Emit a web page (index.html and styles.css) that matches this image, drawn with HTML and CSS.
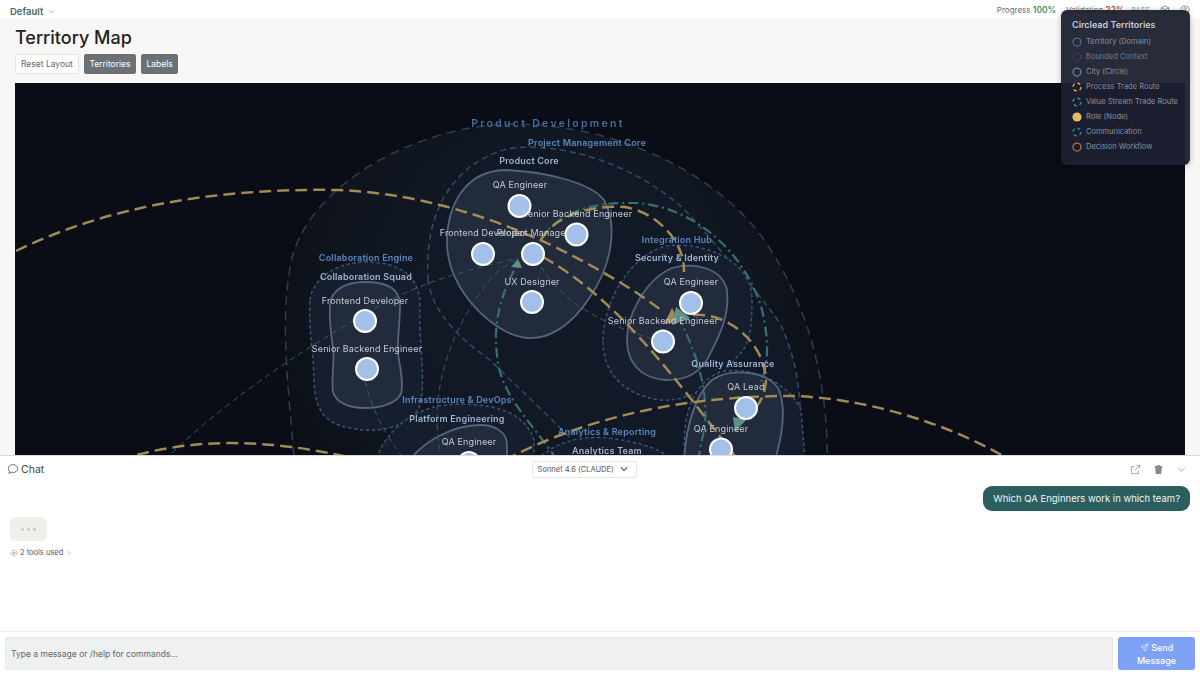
FILE: index.html
```html
<!DOCTYPE html>
<html lang="en">
<head>
  <meta charset="UTF-8" />
  <title>Territory Map</title>
  <link rel="stylesheet" href="styles.css">
</head>
<body>

  <header class="topbar">
    <div class="workspace">Default
      <svg class="chev" viewBox="0 0 10 6"><path d="M1 1l4 4 4-4"/></svg>
    </div>
    <div class="status">
      <span>Progress <b class="good">100%</b></span>
      <span>Validation <b class="bad">22%</b></span>
      <span class="pass">PASS</span>
      <svg class="top-icon" viewBox="0 0 16 16"><path d="M8 1.500l6 3v7l-6 3-6-3v-7zM2 4.500l6 3 6-3M8 7.500v7"/></svg>
      <svg class="top-icon" viewBox="0 0 16 16"><circle cx="8" cy="8" r="6.500"/><path d="M6.200 6.200a1.900 1.900 0 1 1 2.600 1.800c-.5.3-.8.6-.8 1.300M8 11.200v.3"/></svg>
    </div>
  </header>

  <aside class="legend">
    <h4>Circlead Territories</h4>
    <ul>
      <li><svg class="dot" viewBox="0 0 12 12"><circle class="d-domain" cx="6" cy="6" r="4.800"/></svg>Territory (Domain)</li>
      <li class="dim"><svg class="dot" viewBox="0 0 12 12"><circle class="d-context" cx="6" cy="6" r="4.800"/></svg>Bounded Context</li>
      <li><svg class="dot" viewBox="0 0 12 12"><circle class="d-city" cx="6" cy="6" r="4.800"/></svg>City (Circle)</li>
      <li><svg class="dot" viewBox="0 0 12 12"><circle class="d-process" cx="6" cy="6" r="4.800"/></svg>Process Trade Route</li>
      <li><svg class="dot" viewBox="0 0 12 12"><circle class="d-value" cx="6" cy="6" r="4.800"/></svg>Value Stream Trade Route</li>
      <li><svg class="dot" viewBox="0 0 12 12"><circle class="d-role" cx="6" cy="6" r="5.500"/></svg>Role (Node)</li>
      <li><svg class="dot" viewBox="0 0 12 12"><circle class="d-comm" cx="6" cy="6" r="4.800"/></svg>Communication</li>
      <li><svg class="dot" viewBox="0 0 12 12"><circle class="d-decision" cx="6" cy="6" r="4.800"/></svg>Decision Workflow</li>
    </ul>
  </aside>

  <main class="content">
    <h1>Territory Map</h1>
    <div class="toolbar">
      <button class="btn">Reset Layout</button>
      <button class="btn btn-on">Territories</button>
      <button class="btn btn-on">Labels</button>
    </div>

    <div class="map">
      <svg viewBox="15 83 1170 372" width="1170" height="372">
        <defs>
          <radialGradient id="domain-fill" gradientUnits="userSpaceOnUse" cx="550" cy="300" r="290">
            <stop offset="0" stop-color="#151d2c"/>
            <stop offset="0.7" stop-color="#10161f"/>
            <stop offset="1" stop-color="#0b0f17"/>
          </radialGradient>
        </defs>

        <!-- territories -->
        <path class="domain" d="M295 470C290 400 278 320 292 258C305 205 370 150 460 130C560 108 690 150 755 228C800 285 830 370 827 470Z"/>
        <path class="domain-in" d="M428 280C424 215 450 165 507 149C560 140 640 165 690 215C730 262 765 300 781 325C798 365 805 400 797 470H600C560 425 520 390 490 360C455 335 432 310 428 280Z"/>

        <path class="context" d="M310 300C312 280 335 262 366 262C398 262 420 275 420 305C418 345 428 385 418 410C405 428 375 434 350 428C325 424 316 410 314 385C314 350 308 330 310 300Z"/>
        <path class="context" d="M603 340C603 300 635 245 677 245C710 245 750 262 752 297C752 330 750 345 737 357C715 385 690 402 660 400C625 395 603 375 603 340Z"/>
        <path class="context" d="M373 470C382 430 415 405 457 404C495 404 525 412 534 440V470Z"/>
        <path class="context" d="M686 470C680 420 690 385 720 372C755 365 790 385 801 410L806 470Z"/>
        <path class="context" d="M530 470C545 445 575 435 608 438C640 442 670 450 680 470Z"/>

        <!-- cities -->
        <path class="city" d="M447 243C447 205 465 170 507 170C545 172 590 182 604 200C618 225 612 265 590 297C572 325 550 339 528 338C495 336 447 290 447 243Z"/>
        <path class="city" d="M330 305C331 290 345 282 365 282C385 282 400 288 400 305C400 325 397 340 398 352C400 370 404 382 401 394C395 405 378 408 365 408C350 408 336 403 333 392C331 378 335 360 333 348C331 335 329 320 330 305Z"/>
        <path class="city" d="M627 340C627 315 645 280 672 268C695 262 722 268 727 290C730 315 720 335 707 360C695 378 680 380 665 380C640 378 627 362 627 340Z"/>
        <path class="city" d="M684 470C684 430 695 395 712 380C730 368 765 370 778 388C786 405 785 430 772 470Z"/>
        <path class="city" d="M403 470C420 440 455 425 480 425C495 425 507 432 507 445V470Z"/>

        <!-- communication -->
        <path class="comm" d="M165 460C215 410 290 355 390 300C440 275 490 265 518 258"/>
        <path class="comm" d="M365 381C372 410 385 435 405 460"/>
        <path class="comm" d="M440 450C430 400 445 335 490 280C500 268 510 262 520 258"/>
        <path class="comm" d="M536 258C555 295 590 320 650 338"/>

        <!-- value stream routes -->
        <path class="value" d="M557 460C530 420 500 395 497 355C493 325 500 295 517 265"/>
        <path class="value" d="M540 240C560 210 595 202 635 203C690 205 745 250 762 310C770 345 768 365 760 385"/>
        <path class="value" d="M678 316C695 350 708 385 705 425L698 460"/>

        <!-- process routes -->
        <path class="route" d="M16 251C110 205 220 188 340 190C440 195 540 230 640 295L664 312"/>
        <path class="route" d="M543 257C620 300 680 385 738 460"/>
        <path class="route" d="M541 240C555 215 590 205 625 207C655 212 685 240 684 272"/>
        <path class="route" d="M693 315C730 312 765 345 766 380C765 400 755 410 745 418"/>
        <path class="route" d="M120 460C195 435 280 440 360 460"/>
        <path class="route" d="M505 460C590 415 690 396 790 396C860 397 945 422 1005 457"/>

        <polygon class="arrow-gold" points="672,308 664,324 680,322"/>
        <polygon class="arrow-teal" points="676,307 672,325 690,318"/>
        <polygon class="arrow-teal" points="518,259 511,267 522,268"/>
        <polygon class="arrow-teal" points="747,419 733,417 735,432"/>

        <!-- labels -->
        <text class="t-domain" x="548" y="127">Product Development</text>
        <text class="t-ctx" x="587" y="146">Project Management Core</text>
        <text class="t-ctx" x="366" y="261">Collaboration Engine</text>
        <text class="t-ctx" x="677" y="243">Integration Hub</text>
        <text class="t-ctx" x="457" y="403">Infrastructure &amp; DevOps</text>
        <text class="t-ctx" x="607" y="435">Analytics &amp; Reporting</text>

        <text class="t-team" x="529" y="164">Product Core</text>
        <text class="t-team" x="366" y="280">Collaboration Squad</text>
        <text class="t-team" x="677" y="261">Security &amp; Identity</text>
        <text class="t-team" x="733" y="367">Quality Assurance</text>
        <text class="t-team" x="457" y="422">Platform Engineering</text>
        <text class="t-team" x="607" y="454">Analytics Team</text>

        <!-- roles -->
        <circle class="node" cx="519.500" cy="206" r="11"/>
        <circle class="node" cx="576.500" cy="234.500" r="11"/>
        <circle class="node" cx="483" cy="254" r="11"/>
        <circle class="node" cx="533" cy="254" r="11"/>
        <circle class="node" cx="532" cy="302" r="11"/>
        <circle class="node" cx="365" cy="321" r="11"/>
        <circle class="node" cx="367" cy="369" r="11"/>
        <circle class="node" cx="691" cy="303" r="11"/>
        <circle class="node" cx="663" cy="341.500" r="11"/>
        <circle class="node" cx="746" cy="408" r="11"/>
        <circle class="node" cx="721" cy="449.500" r="11"/>
        <circle class="node" cx="469" cy="463" r="11"/>

        <text class="t-role" x="520" y="188">QA Engineer</text>
        <text class="t-role" x="577" y="217">Senior Backend Engineer</text>
        <text class="t-role" x="483" y="236">Frontend Developer</text>
        <text class="t-role" x="533" y="236">Project Manager</text>
        <text class="t-role" x="532" y="285">UX Designer</text>
        <text class="t-role" x="365" y="304">Frontend Developer</text>
        <text class="t-role" x="367" y="352">Senior Backend Engineer</text>
        <text class="t-role" x="691" y="285">QA Engineer</text>
        <text class="t-role" x="663" y="324">Senior Backend Engineer</text>
        <text class="t-role" x="746" y="390">QA Lead</text>
        <text class="t-role" x="721" y="432">QA Engineer</text>
        <text class="t-role" x="469" y="445">QA Engineer</text>
      </svg>
    </div>
  </main>

  <section class="chat">
    <div class="chat-head">
      <div class="chat-title">
        <svg viewBox="0 0 16 16"><path d="M8 2.200c3.500 0 6.300 2.300 6.300 5.200S11.500 12.600 8 12.600c-.8 0-1.500-.1-2.200-.3L2.600 13.800l.8-2.900C2.300 9.900 1.700 8.700 1.700 7.400 1.700 4.500 4.500 2.200 8 2.200z"/><path d="M5.300 7.400h.1M8 7.400h.1M10.700 7.400h.1"/></svg>
        Chat
      </div>
      <div class="model">Sonnet 4.6 (CLAUDE)
        <svg class="chev dark" viewBox="0 0 10 6"><path d="M1 1l4 4 4-4"/></svg>
      </div>
      <div class="chat-actions">
        <svg viewBox="0 0 16 16"><path d="M12 9.500V14H2V4h4.500M9.500 2H14v4.500M14 2L7.500 8.500"/></svg>
        <svg viewBox="0 0 16 16"><path class="filled" d="M3 4h10l-1 10.500H4zM6 1.500h4V3H6zM2 3h12v1H2z"/></svg>
        <svg viewBox="0 0 16 16"><path d="M3 5.500l5 5 5-5"/></svg>
      </div>
    </div>

    <div class="messages">
      <div class="msg-user">Which QA Enginners work in which team?</div>
      <div class="typing"><span></span><span></span><span></span></div>
      <div class="tools">
        <svg viewBox="0 0 16 16"><circle cx="8" cy="8" r="2.300"/><circle cx="8" cy="8" r="6" stroke-dasharray="2.200 1"/></svg>
        2 tools used
        <svg class="tools-chev" viewBox="0 0 6 10"><path d="M1 1l4 4-4 4"/></svg>
      </div>
    </div>

    <form class="composer">
      <input type="text" placeholder="Type a message or /help for commands...">
      <button type="button" class="send">
        <svg viewBox="0 0 16 16"><path d="M14.500 1.500L1.500 6.500l5 2.500 2.500 5.500zM14.500 1.500L6.500 9"/></svg>
        Send Message
      </button>
    </form>
  </section>

</body>
</html>
```

FILE: styles.css
```css
* {
  box-sizing: border-box;
}

body {
  margin: 0;
  height: 675px;
  overflow: hidden;
  display: flex;
  flex-direction: column;
  font-family: Inter, "Liberation Sans", sans-serif;
  background: #fff;
  color: #2b2b2b;
  position: relative;
}

svg {
  display: block;
}

.topbar {
  height: 19px;
  flex: none;
  background: #fff;
  display: flex;
  justify-content: space-between;
  align-items: center;
  padding: 4px 10px 0;
}

.workspace {
  display: flex;
  align-items: center;
  gap: 5px;
  font-size: 9.500px;
  font-weight: 600;
  color: #3f6b63;
}

.chev {
  width: 7px;
  height: 5px;
  fill: none;
  stroke: #9a9a9a;
  stroke-width: 1;
}

.chev.dark {
  width: 8px;
  height: 6px;
  stroke: #444;
  stroke-width: 1.300;
}

.status {
  display: flex;
  align-items: center;
  gap: 10px;
  margin-top: -4px;
  font-size: 8px;
  color: #6f6f6f;
}

.status b {
  font-size: 8.500px;
  font-weight: 600;
}

.good {
  color: #3f8f68;
}

.bad {
  color: #b0563a;
}

.pass {
  margin-left: -3px;
  font-size: 6.500px;
  color: #5c9b7c;
  letter-spacing: 0.500px;
}

.top-icon {
  width: 10px;
  height: 10px;
  fill: none;
  stroke: #666;
  stroke-width: 1.100;
}

.legend {
  position: absolute;
  left: 1061px;
  top: 10px;
  width: 129px;
  height: 155px;
  padding: 9px 11px;
  border-radius: 6px;
  background: rgba(27, 32, 47, 0.95);
  box-shadow: 0 1px 6px rgba(0, 0, 0, 0.25);
  z-index: 2;
}

.legend h4 {
  margin: 0 0 4px;
  font-size: 9px;
  font-weight: 600;
  color: #c6cad4;
}

.legend ul {
  margin: 0;
  padding: 0;
  list-style: none;
}

.legend li {
  height: 15px;
  display: flex;
  align-items: center;
  gap: 4px;
  font-size: 7.500px;
  color: #8b90a0;
  white-space: nowrap;
}

.legend li.dim {
  color: #767b8b;
}

.dot {
  width: 10px;
  height: 10px;
  flex: none;
  fill: none;
  stroke-width: 1.500;
}

.d-domain {
  stroke: #4f6a9c;
}

.d-context {
  stroke: #474c5c;
  stroke-dasharray: 1.500 1.500;
}

.d-city {
  stroke: #6f8a8a;
}

.d-process {
  stroke: #e3b85f;
  stroke-dasharray: 4 3.500;
}

.d-value {
  stroke: #4f9a9a;
  stroke-dasharray: 4 3.500;
}

.d-role {
  fill: #e6bb62;
  stroke: none;
}

.d-comm {
  stroke: #3f8a7f;
  stroke-dasharray: 4 3.500;
}

.d-decision {
  stroke: #b9713f;
}

.content {
  height: 436px;
  flex: none;
  display: flex;
  flex-direction: column;
  padding: 6px 15px 0;
  background: #f8f7f5;
}

h1 {
  margin: 0;
  height: 25px;
  font-size: 18px;
  line-height: 25px;
  font-weight: 500;
  color: #222;
}

.toolbar {
  display: flex;
  gap: 5px;
  margin-top: 4px;
}

.btn {
  height: 20px;
  padding: 0 5px;
  font-family: inherit;
  font-size: 8.500px;
  color: #666;
  background: #fff;
  border: 1px solid #e6e4e0;
  border-radius: 2px;
}

.btn-on {
  padding: 0 4.500px;
  color: #fff;
  background: #6b7177;
  border-color: #6b7177;
}

.map {
  margin-top: 9px;
  height: 372px;
  overflow: hidden;
  background: #0a0d15;
}

.map svg {
  filter: blur(0.350px);
}

.domain {
  fill: url(#domain-fill);
  stroke: #2f3d54;
  stroke-width: 1.500;
  stroke-dasharray: 9 6;
}

.domain-in {
  fill: #121926;
  stroke: #374963;
  stroke-width: 1.500;
  stroke-dasharray: 6 4;
}

.context {
  fill: #161e2e;
  stroke: #3b5178;
  stroke-width: 1.500;
  stroke-dasharray: 3.500 2.500;
}

.city {
  fill: #212b3c;
  stroke: #566378;
  stroke-width: 1.800;
}

.comm {
  fill: none;
  stroke: #3a5862;
  stroke-width: 1;
  stroke-dasharray: 6 4;
}

.value {
  fill: none;
  stroke: #3a6f6e;
  stroke-width: 2.200;
  stroke-dasharray: 10 4 2 4;
}

.route {
  fill: none;
  stroke: #a08a55;
  stroke-width: 2.500;
  stroke-dasharray: 12 6;
}

.arrow-gold {
  fill: #a08a55;
}

.arrow-teal {
  fill: #5f9187;
}

.node {
  fill: #a3c1e8;
  stroke: #fff;
  stroke-width: 2;
}

text {
  text-anchor: middle;
}

.t-domain {
  font-size: 10.500px;
  font-weight: 600;
  letter-spacing: 2.300px;
  fill: #496d9f;
}

.t-ctx {
  font-size: 9px;
  font-weight: 600;
  letter-spacing: 0.200px;
  fill: #5c86bf;
}

.t-team {
  font-size: 9px;
  font-weight: 600;
  letter-spacing: 0.200px;
  fill: #9fb3d0;
}

.t-role {
  font-size: 9px;
  letter-spacing: 0.150px;
  fill: #c5c9d0;
}

.chat {
  flex: 1;
  min-height: 0;
  display: flex;
  flex-direction: column;
  background: #fff;
  border-top: 1px solid #ddd;
}

.chat-head {
  height: 26px;
  flex: none;
  display: flex;
  align-items: center;
  justify-content: space-between;
  padding: 0 13px 0 7px;
}

.chat-title {
  display: flex;
  align-items: center;
  gap: 2px;
  font-size: 10.500px;
  color: #444;
}

.chat-title svg {
  width: 12px;
  height: 12px;
  fill: none;
  stroke: #555;
  stroke-width: 1.100;
}

.model {
  width: 105px;
  height: 17px;
  margin-right: 6px;
  display: flex;
  align-items: center;
  justify-content: space-between;
  padding: 0 8px 0 5px;
  font-size: 7.500px;
  color: #555;
  border: 1px solid #e8e8e8;
  border-radius: 2px;
}

.chat-actions {
  display: flex;
  gap: 12px;
}

.chat-actions svg {
  width: 11px;
  height: 11px;
  fill: none;
  stroke: #8a8a8a;
  stroke-width: 1.100;
}

.chat-actions .filled {
  fill: #8a8a8a;
  stroke: none;
}

.messages {
  flex: 1;
  min-height: 0;
  display: flex;
  flex-direction: column;
  padding: 4px 10px 0;
  border-bottom: 1px solid #eee;
}

.msg-user {
  align-self: flex-end;
  height: 25px;
  padding: 0 10px;
  display: flex;
  align-items: center;
  font-size: 9.500px;
  color: #f2f5f5;
  background: #2b5e5e;
  border-radius: 9px;
}

.typing {
  width: 37px;
  height: 24px;
  margin-top: 6px;
  display: flex;
  align-items: center;
  justify-content: center;
  gap: 3px;
  background: #f0efeb;
  border-radius: 6px;
}

.typing span {
  width: 3px;
  height: 3px;
  border-radius: 50%;
  background: #c8c8c6;
}

.tools {
  display: flex;
  align-items: center;
  gap: 2px;
  margin-top: 7px;
  font-size: 7.500px;
  color: #555;
}

.tools svg {
  width: 7px;
  height: 8px;
  fill: none;
  stroke: #777;
  stroke-width: 1.200;
}

.tools svg:first-child {
  width: 8px;
}

.tools .tools-chev {
  width: 4px;
  height: 6px;
  margin-left: 2px;
  stroke: #aaa;
}

.composer {
  height: 43px;
  flex: none;
  display: flex;
  gap: 5px;
  padding: 5px;
}

.composer input {
  flex: 1;
  padding: 0 5px;
  font-family: inherit;
  font-size: 8.500px;
  color: #555;
  background: #eff0f1;
  border: 1px solid #e9e9e6;
  border-radius: 2px;
}

.composer input::placeholder {
  color: #666;
}

.send {
  width: 77px;
  padding: 0 12px;
  font-family: inherit;
  font-size: 9px;
  line-height: 13px;
  font-weight: 500;
  text-align: center;
  color: #fff;
  background: #7da2f5;
  border: none;
  border-radius: 3px;
}

.send svg {
  display: inline-block;
  vertical-align: -1px;
  width: 9px;
  height: 9px;
  fill: none;
  stroke: #fff;
  stroke-width: 1;
}
```
